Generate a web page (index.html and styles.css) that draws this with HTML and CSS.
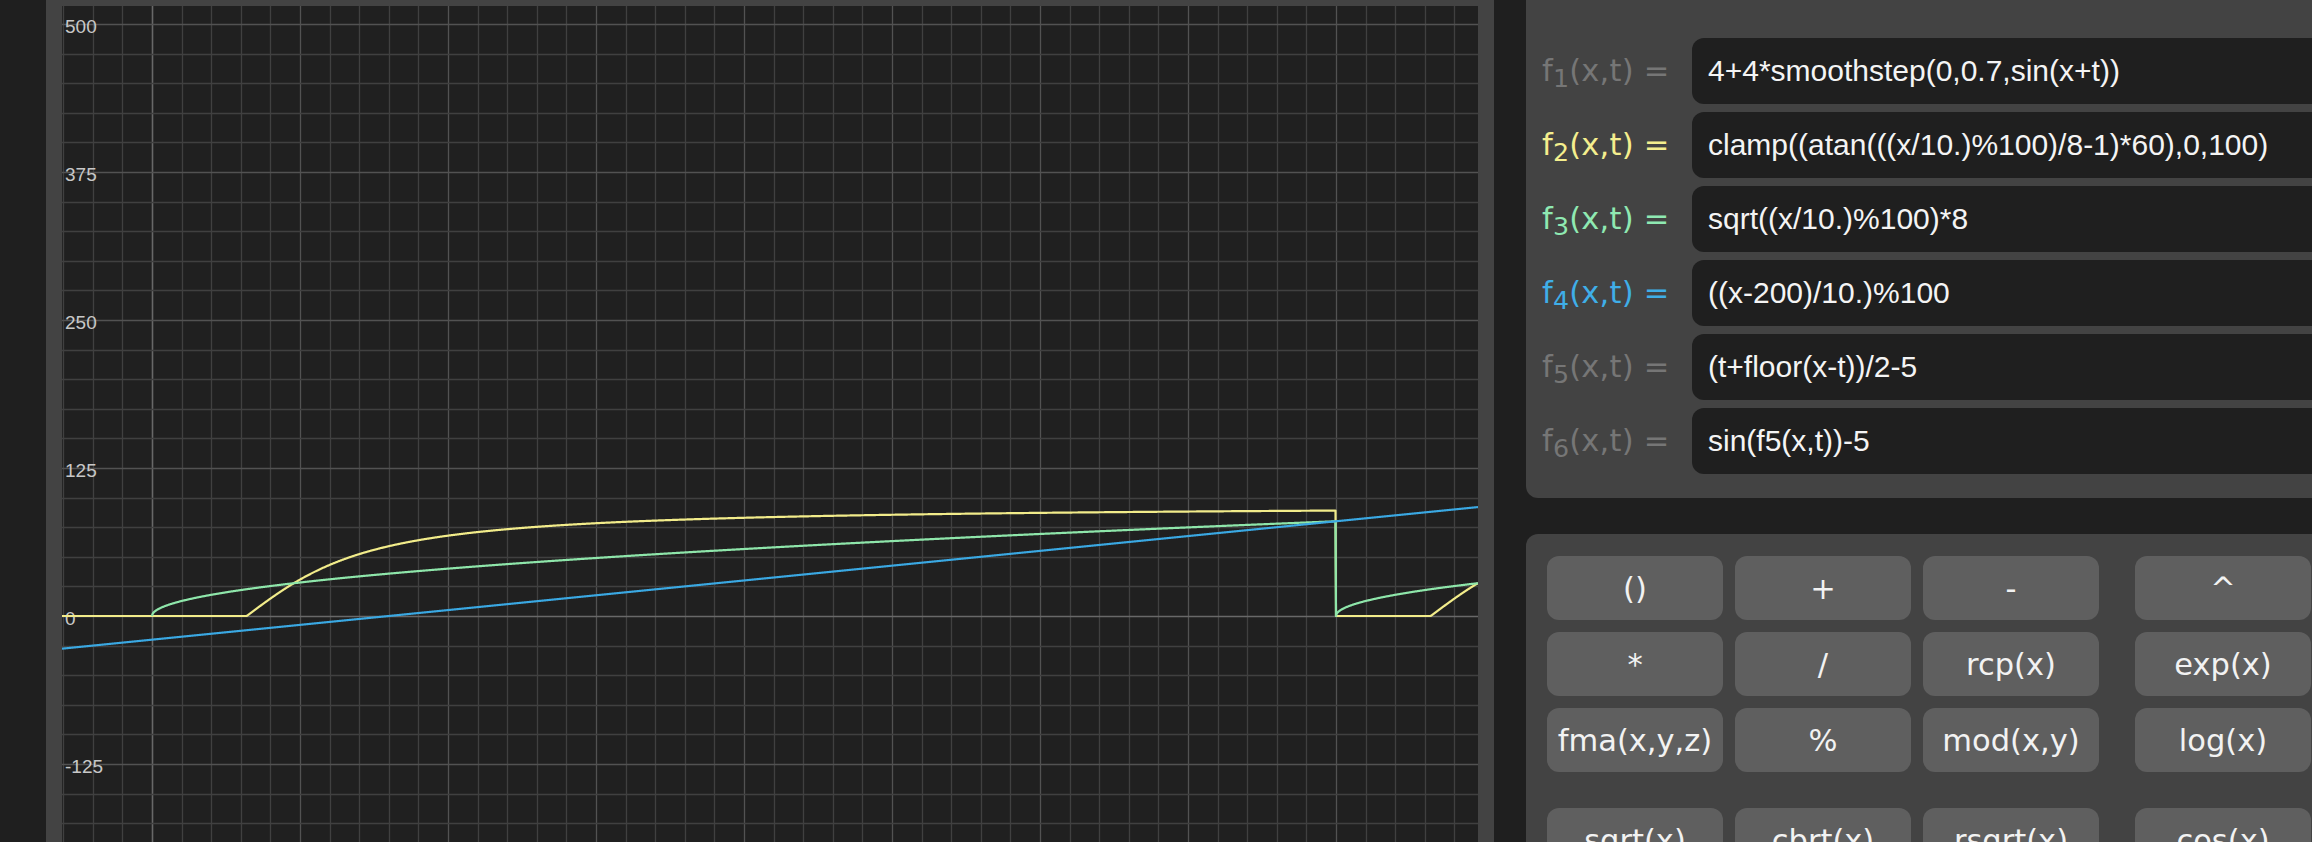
FILE: index.html
```html
<!DOCTYPE html>
<html lang="en">
<head>
<meta charset="utf-8">
<title>Function plotter</title>
<link rel="stylesheet" href="styles.css">
</head>
<body>
<div class="app">
  <section class="graph-panel">
    <div class="graph">
      <svg id="plot" class="plot" width="1416" height="836" viewBox="0 0 1416 836">
        <g id="grid"></g>
        <g class="ticks">
          <text x="3" y="27">500</text>
          <text x="3" y="175">375</text>
          <text x="3" y="323">250</text>
          <text x="3" y="471">125</text>
          <text x="3" y="619">0</text>
          <text x="3" y="767">-125</text>
        </g>
        <g id="curves"></g>
      </svg>
    </div>
  </section>
  <aside class="side">
    <div class="formulas">
      <div class="row off"><span class="lbl">f<sub>1</sub>(x,t) =</span><div class="expr">4+4*smoothstep(0,0.7,sin(x+t))</div></div>
      <div class="row c-yellow"><span class="lbl">f<sub>2</sub>(x,t) =</span><div class="expr">clamp((atan(((x/10.)%100)/8-1)*60),0,100)</div></div>
      <div class="row c-green"><span class="lbl">f<sub>3</sub>(x,t) =</span><div class="expr">sqrt((x/10.)%100)*8</div></div>
      <div class="row c-blue"><span class="lbl">f<sub>4</sub>(x,t) =</span><div class="expr">((x-200)/10.)%100</div></div>
      <div class="row off"><span class="lbl">f<sub>5</sub>(x,t) =</span><div class="expr">(t+floor(x-t))/2-5</div></div>
      <div class="row off"><span class="lbl">f<sub>6</sub>(x,t) =</span><div class="expr">sin(f5(x,t))-5</div></div>
    </div>
    <div class="keypad">
      <div class="group">
        <div class="key">()</div><div class="key">+</div><div class="key">-</div>
        <div class="key">*</div><div class="key">/</div><div class="key">rcp(x)</div>
        <div class="key">fma(x,y,z)</div><div class="key">%</div><div class="key">mod(x,y)</div>
      </div>
      <div class="group narrow">
        <div class="key">^</div>
        <div class="key">exp(x)</div>
        <div class="key">log(x)</div>
      </div>
      <div class="group">
        <div class="key">sqrt(x)</div><div class="key">cbrt(x)</div><div class="key">rsqrt(x)</div>
      </div>
      <div class="group narrow">
        <div class="key">cos(x)</div>
      </div>
    </div>
  </aside>
</div>
<script src="script.js"></script>
</body>
</html>
```

FILE: styles.css
```css
html, body {
  margin: 0;
  padding: 0;
  width: 2312px;
  height: 842px;
  overflow: hidden;
  background: #1f1f1f;
}

.app {
  display: flex;
  gap: 32px;
  padding-left: 46px;
  height: 842px;
}

.graph-panel {
  flex: 0 0 auto;
  background: #434343;
  padding: 6px 16px 0;
}

.graph {
  width: 1416px;
  height: 836px;
  background: #202020;
}

.plot {
  display: block;
}

.ticks text {
  font-family: "Liberation Sans", Arial, sans-serif;
  font-size: 19px;
  fill: #c8c8c8;
}

.side {
  flex: 0 0 1000px;
  display: flex;
  flex-direction: column;
  gap: 36px;
}

.formulas {
  background: #434343;
  border-bottom-left-radius: 12px;
  padding: 38px 0 24px 16px;
  display: flex;
  flex-direction: column;
  gap: 8px;
}

.row {
  display: flex;
  align-items: center;
}

.lbl {
  flex: 0 0 150px;
  font-family: "DejaVu Sans", Verdana, sans-serif;
  font-size: 30.5px;
  white-space: nowrap;
  line-height: 1;
  letter-spacing: 0.2px;
}

.lbl sub {
  font-size: 0.83em;
  vertical-align: -0.22em;
  line-height: 0;
}

.row.off .lbl { color: #767676; }
.row.c-yellow .lbl { color: #f4ee8e; }
.row.c-green .lbl { color: #8fe9b2; }
.row.c-blue .lbl { color: #3faee8; }

.expr {
  flex: 1;
  height: 66px;
  box-sizing: border-box;
  border-radius: 12px;
  background: #1f1f1f;
  color: #f4f4f4;
  font-family: "Liberation Sans", Arial, sans-serif;
  font-size: 30px;
  display: flex;
  align-items: center;
  padding-left: 16px;
  white-space: nowrap;
}

.keypad {
  flex: 1;
  background: #434343;
  border-top-left-radius: 12px;
  padding: 22px 21px;
  display: grid;
  grid-template-columns: max-content max-content;
  column-gap: 36px;
  row-gap: 36px;
  align-content: start;
}

.group {
  display: grid;
  grid-template-columns: repeat(3, 176px);
  gap: 12px;
}

.group.narrow {
  grid-template-columns: 176px;
}

.key {
  height: 64px;
  border-radius: 12px;
  background: #5f5f5f;
  color: #f2f2f2;
  font-family: "DejaVu Sans", Verdana, sans-serif;
  font-size: 30.5px;
  display: flex;
  align-items: center;
  justify-content: center;
  white-space: nowrap;
}
```

FILE: script.js
```js
(function () {
  var NS = "http://www.w3.org/2000/svg";
  var W = 1416, H = 836;
  var ox = 90, oy = 610;
  var k = 148 / 125;
  var cell = 29.6;

  var grid = document.getElementById("grid");
  function line(x1, y1, x2, y2, color, w) {
    var l = document.createElementNS(NS, "line");
    l.setAttribute("x1", x1); l.setAttribute("y1", y1);
    l.setAttribute("x2", x2); l.setAttribute("y2", y2);
    l.setAttribute("stroke", color);
    l.setAttribute("stroke-width", w);
    grid.appendChild(l);
  }
  function style(n) {
    if (n === 0) return ["#686868", 1.6];
    if (n % 5 === 0) return ["#525252", 1.3];
    return ["#404040", 1.3];
  }
  var n, p, s;
  for (n = -3; ox + n * cell <= W; n++) {
    p = Math.round(ox + n * cell) + 0.5;
    s = style(n);
    line(p, 0, p, H, s[0], s[1]);
  }
  for (n = -20; oy + n * cell <= H; n++) {
    p = Math.round(oy + n * cell) + 0.5;
    s = style(n);
    line(0, p, W, p, s[0], s[1]);
  }

  var curves = document.getElementById("curves");
  function plot(f, color) {
    var d = "", pen = false, px, X, v, y;
    for (px = 0; px <= W; px += 0.5) {
      X = (px - ox) / k;
      v = f(X);
      if (isNaN(v)) { pen = false; continue; }
      y = oy - v * k;
      d += (pen ? "L" : "M") + px.toFixed(2) + " " + y.toFixed(2);
      pen = true;
    }
    var path = document.createElementNS(NS, "path");
    path.setAttribute("d", d);
    path.setAttribute("fill", "none");
    path.setAttribute("stroke", color);
    path.setAttribute("stroke-width", "2.2");
    path.setAttribute("stroke-linejoin", "round");
    curves.appendChild(path);
  }

  plot(function (X) {
    var u = (X / 10) % 100;
    return Math.min(100, Math.max(0, Math.atan(u / 8 - 1) * 60));
  }, "#f2ec8a");
  plot(function (X) {
    return Math.sqrt((X / 10) % 100) * 8;
  }, "#8ee6aa");
  plot(function (X) {
    return ((X - 200) / 10) % 100;
  }, "#3aa8e2");
})();
```
